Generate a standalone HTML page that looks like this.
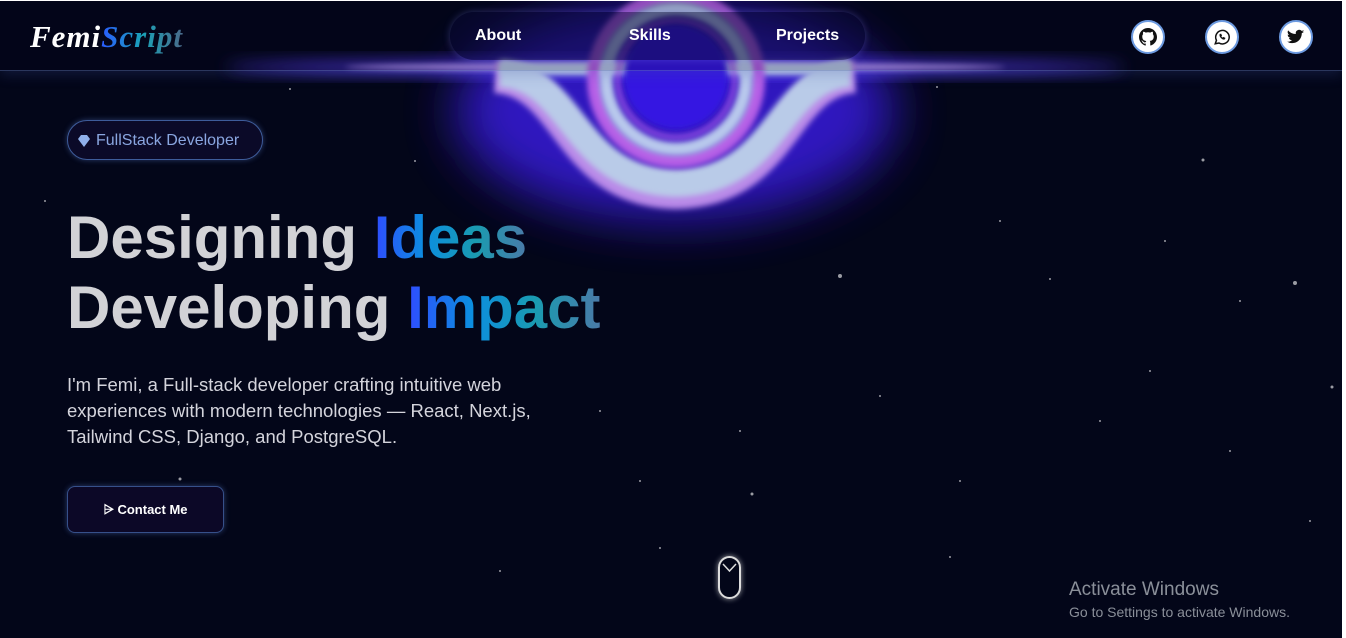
<!DOCTYPE html>
<html><head><meta charset="utf-8"><style>
*{margin:0;padding:0;box-sizing:border-box}
body{width:1346px;height:638px;overflow:hidden;background:#fff;font-family:"Liberation Sans",sans-serif}
.page{position:absolute;left:0;top:1px;width:1342px;height:637px;background:#030619;overflow:hidden}
.bh{position:absolute;left:0;top:0}
.hdr{position:absolute;left:0;top:0;width:1342px;height:70px;background:rgba(3,6,25,.2);border-bottom:1px solid rgba(120,150,220,.35);box-shadow:0 4px 12px rgba(60,80,160,.25)}
.logo{position:absolute;left:30px;top:18px;font-family:"Liberation Serif",serif;font-style:italic;font-weight:bold;font-size:31px;letter-spacing:1px}
.logo .a{color:#fff}.logo .b{background:linear-gradient(90deg,#2a5bff,#1aa3b8,#4a6a8a);-webkit-background-clip:text;color:transparent}
.nav{position:absolute;left:450px;top:11px;width:415px;height:48px;border-radius:24px;background:rgba(10,10,60,.45);box-shadow:0 0 8px rgba(140,140,255,.3)}
.nav span{position:absolute;top:15px;color:#fff;font-weight:bold;font-size:16px}
.soc{position:absolute;top:19px;width:34px;height:34px;border-radius:50%;background:#fff;border:2px solid #6c9ae0;display:flex;align-items:center;justify-content:center}
.badge{position:absolute;left:67px;top:119px;width:196px;height:40px;border-radius:20px;border:1.5px solid #3e5c9a;background:#0b0a28;box-shadow:0 0 6px rgba(100,140,230,.4);color:#8aa6e0;font-size:16px;padding:11px 0 0 28px}
.badge i{position:absolute;left:10px;top:13px;width:12px;height:12px}
h1{position:absolute;left:67px;top:202px;font-size:60px;line-height:70px;color:#d2d2d6;font-weight:bold}
.g{background:linear-gradient(90deg,#2f4cff,#0c8ee0,#1a9bb0,#4a7aa8);-webkit-background-clip:text;color:transparent}
p.d{position:absolute;left:67px;top:371px;width:505px;font-size:18.5px;line-height:26px;color:#d4d4dc}
.btn{position:absolute;left:67px;top:485px;width:157px;height:47px;border-radius:8px;border:1.5px solid #36508a;background:#0c0827;box-shadow:0 0 6px rgba(100,140,230,.4);color:#fff;font-weight:bold;font-size:13px;text-align:center;line-height:45px}
.mouse{position:absolute;left:718px;top:555px;width:23px;height:43px;border:2px solid #ddd;border-radius:12px;box-shadow:0 0 6px rgba(255,255,255,.6)}
.aw{position:absolute;left:1069px;top:578px;color:#8a8f99;font-size:19px}
.aw2{position:absolute;left:1069px;top:603px;color:#8a8f99;font-size:14px}
</style></head><body><div class="page">
<svg class="bh" width="1342" height="637">
<defs>
<filter id="b8" x="-50%" y="-50%" width="200%" height="200%"><feGaussianBlur stdDeviation="8"/></filter>
<filter id="b30" x="-50%" y="-100%" width="200%" height="300%"><feGaussianBlur stdDeviation="25"/></filter>
<filter id="b3" x="-20%" y="-50%" width="140%" height="200%"><feGaussianBlur stdDeviation="3"/></filter>
</defs>
<g fill="#fff" opacity=".6">
<circle cx="840" cy="275" r="2"/><circle cx="1295" cy="282" r="2"/><circle cx="1332" cy="386" r="1.5"/><circle cx="752" cy="493" r="1.5"/><circle cx="660" cy="547" r="1"/><circle cx="180" cy="478" r="1.5"/><circle cx="1203" cy="159" r="1.5"/><circle cx="1000" cy="220" r="1"/><circle cx="937" cy="86" r="1"/><circle cx="415" cy="160" r="1"/><circle cx="290" cy="88" r="1"/><circle cx="1050" cy="278" r="1"/><circle cx="1165" cy="240" r="1"/><circle cx="1240" cy="300" r="1"/><circle cx="1100" cy="420" r="1"/><circle cx="960" cy="480" r="1"/><circle cx="880" cy="395" r="1"/><circle cx="1230" cy="450" r="1"/><circle cx="1310" cy="520" r="1"/><circle cx="640" cy="480" r="1"/><circle cx="500" cy="570" r="1"/><circle cx="740" cy="430" r="1"/><circle cx="600" cy="410" r="1"/><circle cx="1150" cy="370" r="1"/><circle cx="45" cy="200" r="1"/><circle cx="950" cy="556" r="1"/>
</g>
<ellipse cx="675" cy="110" rx="220" ry="110" fill="#3a1fe8" opacity=".8" filter="url(#b30)"/>
<ellipse cx="675" cy="66" rx="450" ry="8" fill="#5a3cff" opacity=".9" filter="url(#b8)"/>
<ellipse cx="675" cy="66" rx="330" ry="4" fill="#c8a8ff" opacity=".9" filter="url(#b3)"/>
<path d="M495 76 C570 80 565 190 676 192 C787 190 782 80 855 76" stroke="#b98ae8" stroke-width="32" fill="none" filter="url(#b3)"/>
<path d="M500 72 C575 76 572 180 676 182 C780 180 777 76 850 72" stroke="#b9cbe8" stroke-width="28" fill="none" filter="url(#b3)"/>
<rect x="500" y="62" width="350" height="12" fill="#b9cbe8" filter="url(#b3)"/>
<circle cx="676" cy="78" r="82" fill="none" stroke="#b55fe6" stroke-width="14" filter="url(#b3)"/>
<circle cx="676" cy="78" r="70" fill="none" stroke="#b8c8ec" stroke-width="14" filter="url(#b3)"/>
<circle cx="676" cy="78" r="58" fill="none" stroke="#9a50e6" stroke-width="6" opacity=".8" filter="url(#b3)"/>
<circle cx="676" cy="76" r="52" fill="#3416e2" filter="url(#b3)"/>
</svg>
<div class="hdr"></div>
<div class="logo"><span class="a">Femi</span><span class="b">Script</span></div>
<div class="nav"><span style="left:25px">About</span><span style="left:179px">Skills</span><span style="left:326px">Projects</span></div>
<div class="soc" style="left:1131px"><svg width="18" height="18" viewBox="0 0 16 16"><path fill="#111" d="M8 0C3.6 0 0 3.6 0 8c0 3.5 2.3 6.5 5.5 7.6.4.1.5-.2.5-.4v-1.4c-2.2.5-2.7-1-2.7-1-.4-.9-.9-1.2-.9-1.2-.7-.5.1-.5.1-.5.8.1 1.2.8 1.2.8.7 1.3 1.9.9 2.3.7.1-.5.3-.9.5-1.1-1.8-.2-3.6-.9-3.6-4 0-.9.3-1.6.8-2.1-.1-.2-.4-1 .1-2.1 0 0 .7-.2 2.2.8.6-.2 1.3-.3 2-.3s1.4.1 2 .3c1.5-1 2.2-.8 2.2-.8.4 1.1.2 1.9.1 2.1.5.6.8 1.3.8 2.1 0 3.1-1.9 3.7-3.6 3.9.3.3.5.8.5 1.5v2.2c0 .2.1.5.6.4C13.7 14.5 16 11.5 16 8c0-4.4-3.6-8-8-8z"/></svg></div>
<div class="soc" style="left:1205px"><svg width="18" height="18" viewBox="0 0 24 24" fill="none" stroke="#111" stroke-width="2"><path d="M3 21l1.6-4.6A9 9 0 1 1 8 20z"/><path d="M9 9c0 3 3 6 6 6l1-1.5-2-1-1 1c-1-.5-2-1.5-2.5-2.5l1-1-1-2z" fill="#111" stroke-width="1"/></svg></div>
<div class="soc" style="left:1279px"><svg width="18" height="18" viewBox="0 0 24 24"><path fill="#111" d="M23 4.6a9 9 0 0 1-2.6.7 4.6 4.6 0 0 0 2-2.5 9 9 0 0 1-2.9 1.1 4.5 4.5 0 0 0-7.7 4.1A12.8 12.8 0 0 1 1.5 3.2a4.5 4.5 0 0 0 1.4 6 4.5 4.5 0 0 1-2-.6v.1a4.5 4.5 0 0 0 3.6 4.4 4.5 4.5 0 0 1-2 .1 4.5 4.5 0 0 0 4.2 3.1A9 9 0 0 1 0 18.2a12.8 12.8 0 0 0 6.9 2c8.3 0 12.8-6.9 12.8-12.8v-.6A9 9 0 0 0 23 4.6z"/></svg></div>
<div class="badge"><i><svg width="12" height="12" viewBox="0 0 12 12"><path d="M0 4L3 0h6l3 4-6 8z" fill="#8fb0ea"/></svg></i>FullStack Developer</div>
<h1>Designing <span class="g">Ideas</span><br>Developing <span class="g">Impact</span></h1>
<p class="d">I'm Femi, a Full-stack developer crafting intuitive web experiences with modern technologies — React, Next.js, Tailwind CSS, Django, and PostgreSQL.</p>
<div class="btn">⩥ Contact Me</div>
<div class="mouse"><svg width="19" height="12" style="position:absolute;left:0;top:4px"><path d="M3 2l6.5 7L16 2" stroke="#ddd" stroke-width="1.5" fill="none"/></svg></div>
<div class="aw">Activate Windows</div>
<div class="aw2">Go to Settings to activate Windows.</div>
</div></body></html>
